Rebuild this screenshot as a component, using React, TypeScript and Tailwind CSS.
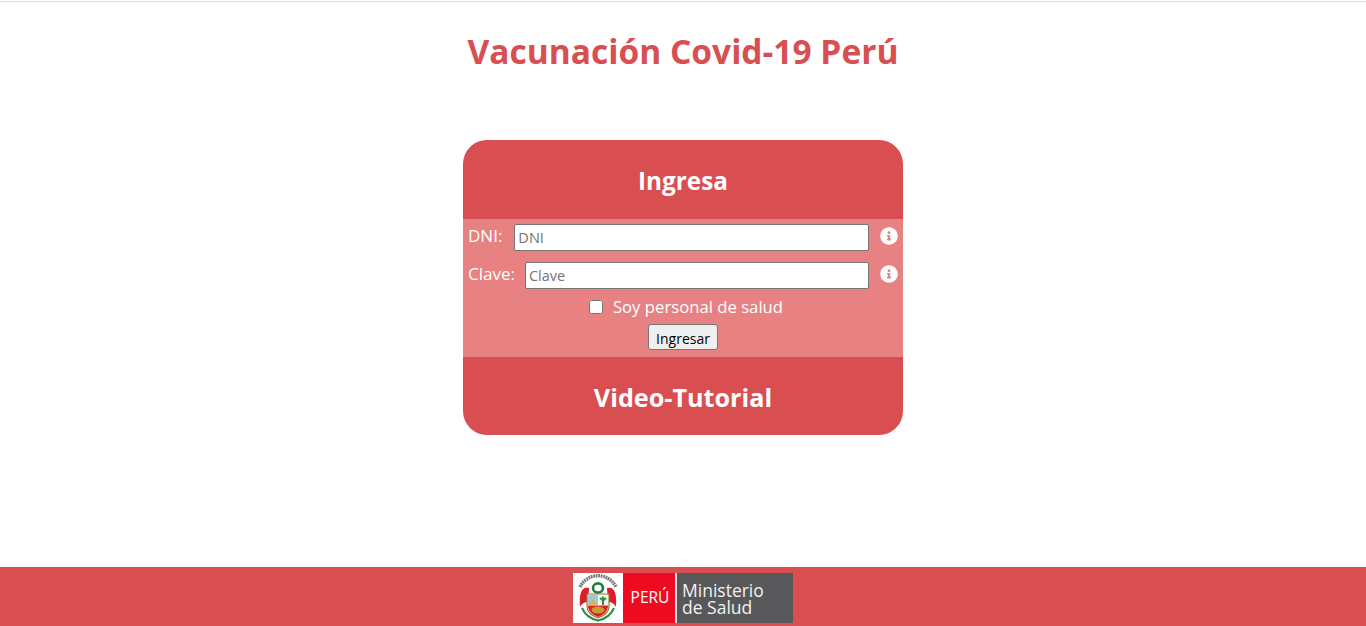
import { useState } from 'react'

function InfoIcon() {
  return (
    <svg viewBox="0 0 512 512" className="w-[18px] h-[18px] shrink-0" fill="#ffffff">
      <path d="M256 8C119 8 8 119 8 256s111 248 248 248 248-111 248-248S393 8 256 8zm0 110c23 0 42 19 42 42s-19 42-42 42-42-19-42-42 19-42 42-42zm56 254c0 7-5 12-12 12h-88c-7 0-12-5-12-12v-24c0-7 5-12 12-12h12v-64h-12c-7 0-12-5-12-12v-24c0-7 5-12 12-12h64c7 0 12 5 12 12v100h12c7 0 12 5 12 12v24z" />
    </svg>
  )
}

// escudo del Perú, dibujado a mano
function Crest() {
  return (
    <svg viewBox="0 0 50 50" className="w-[50px] h-[50px] bg-white shrink-0 blur-[0.4px]">
      <path d="M7 14 A20 20 0 0 1 43 14" fill="none" stroke="#77777a" strokeWidth="3.4" strokeDasharray="1.8 0.7" />
      <ellipse cx="25" cy="15" rx="5" ry="4.6" fill="none" stroke="#1f7d3c" strokeWidth="2.6" />
      <path d="M16 15 C9 13 6 19 7 34 C9 30 12 29 15 29 Z" fill="#e01b2c" />
      <path d="M34 15 C41 13 44 19 43 34 C41 30 38 29 35 29 Z" fill="#e01b2c" />
      <path d="M14 21 H36 V33 C36 40 31 43 25 45 C19 43 14 40 14 33 Z" fill="#fff" stroke="#8f7a2c" strokeWidth="1.2" />
      <rect x="15" y="22" width="10" height="10" fill="#9cc9d6" />
      <path d="M15.5 32 L20 26 L24.5 32 Z" fill="#d9b44a" />
      <rect x="25" y="22" width="10" height="10" fill="#f4f4ec" />
      <path d="M30 23.5 V32 M27 25 L30 27.5 L33 25" stroke="#2f8a45" strokeWidth="2" fill="none" />
      <path d="M15 32.5 H35 C35 39 30 42 25 44 C20 42 15 39 15 32.5 Z" fill="#e01b2c" />
      <ellipse cx="25" cy="37" rx="6.5" ry="3.4" fill="#c99a2e" />
      <path d="M9 35 C12 42 18 46 25 47.5 C32 46 38 42 41 35" fill="none" stroke="#2f8a45" strokeWidth="2" />
    </svg>
  )
}

function Field({ label, id, gap }: { label: string; id: string; gap: string }) {
  return (
    <div className="flex items-center h-[27px]">
      <label htmlFor={id} className={`${gap} ml-[5px] -mt-[4px] text-[17px] text-white whitespace-nowrap`}>{label}:</label>
      <input
        id={id}
        type="text"
        placeholder={label}
        className="flex-1 min-w-0 h-[27px] px-[3px] text-[14.5px] text-black bg-white border border-[#767676] rounded-[2px] outline-none placeholder:text-[#757575]"
      />
      <span className="ml-[11px] mr-[5px] -mt-[4px]"><InfoIcon /></span>
    </div>
  )
}

export default function App() {
  const [salud, setSalud] = useState(false)

  return (
    <div className="min-h-[626px] flex flex-col bg-white font-['Open_Sans','Noto_Sans',sans-serif]">
      <div className="h-[2px] border-b border-[#dcdcdc]" />
      <h1 className="mt-[25px] mb-[1px] text-center text-[33.5px] leading-[48px] font-bold text-[#d94f51]">
        Vacunación Covid-19 Perú
      </h1>

      <main className="flex-1">
        <div className="mt-[64px] mx-auto w-[440px] rounded-[24px] overflow-hidden bg-[#d94f51]">
          <h2 className="h-[79px] pt-[3px] flex items-center justify-center text-[24.3px] font-bold text-white">Ingresa</h2>

          <form className="h-[138px] bg-[#e88181] pt-[5px] flex flex-col" onSubmit={e => e.preventDefault()}>
            <Field label="DNI" id="dni" gap="mr-[12px]" />
            <div className="mt-[11px]">
              <Field label="Clave" id="clave" gap="mr-[10px]" />
            </div>
            <label className="mt-[5px] h-[26px] pl-[6px] flex items-center justify-center text-[16.7px] text-white">
              <input
                type="checkbox"
                checked={salud}
                onChange={e => setSalud(e.target.checked)}
                className="w-[14px] h-[14px] mr-[10px]"
              />
              Soy personal de salud
            </label>
            <div className="mt-[4px] flex justify-center">
              <button className="w-[70px] h-[26px] pt-[2px] text-[14px] text-black bg-[#efefef] border border-[#767676] rounded-[3px]">
                Ingresar
              </button>
            </div>
          </form>

          <h2 className="h-[78px] pt-[4px] flex items-center justify-center text-[25.2px] font-bold text-white">Video-Tutorial</h2>
        </div>
      </main>

      <footer className="h-[59px] bg-[#d94f51] flex justify-center items-start pt-[6px]">
        <div className="flex h-[50px] w-[220px]">
          <Crest />
          <div className="w-[52px] pl-[2px] bg-[#ee0b22] flex items-center justify-center text-[15.5px] text-white">PERÚ</div>
          <div className="flex-1 border-l-2 border-[#e4e4e4] bg-[#58585a] pl-[5px] pt-[2px] flex flex-col justify-center text-[17.5px] leading-[17px] text-[#f1f1f1]">
            <span>Ministerio</span>
            <span>de Salud</span>
          </div>
        </div>
      </footer>
    </div>
  )
}
